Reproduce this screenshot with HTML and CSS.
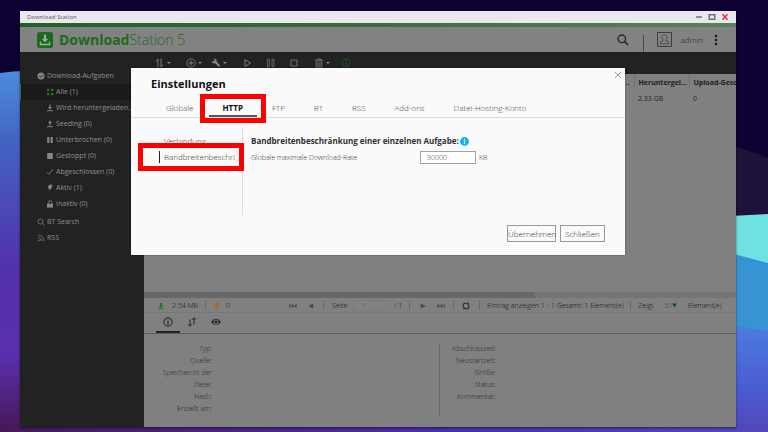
FILE: index.html
```html
<!DOCTYPE html>
<html lang="de">
<head>
<meta charset="utf-8">
<title>Download Station</title>
<link rel="stylesheet" href="styles.css">
</head>
<body>
<svg class="wallpaper" viewBox="0 0 768 432" preserveAspectRatio="none" aria-hidden="true">
  <defs>
    <linearGradient id="left" x1="0" y1="0" x2="0" y2="1">
      <stop offset="0" stop-color="#4b8bdd"/><stop offset=".2" stop-color="#4363c1"/><stop offset=".55" stop-color="#5230ad"/><stop offset=".78" stop-color="#5a2fae"/><stop offset="1" stop-color="#47195a"/>
    </linearGradient>
    <linearGradient id="right" x1="0" y1="0" x2="0" y2="1">
      <stop offset="0" stop-color="#4b7ddd"/><stop offset=".6" stop-color="#4a5bd2"/><stop offset="1" stop-color="#5248b8"/>
    </linearGradient>
    <linearGradient id="floor" x1="0" y1="0" x2="1" y2="0">
      <stop offset="0" stop-color="#47195a"/><stop offset=".3" stop-color="#4b2484"/><stop offset=".6" stop-color="#4a31ae"/><stop offset="1" stop-color="#5248c0"/>
    </linearGradient>
  </defs>
  <rect width="768" height="432" fill="#0d0231"/>
  <path d="M0 73Q14 71 24 71V432H0Z" fill="url(#left)"/>
  <path d="M730 144L768 158V220H730Z" fill="#1d1239"/>
  <path d="M730 216L768 214V268H730Z" fill="#6ee1e2"/>
  <path d="M730 253L768 263V340H730Z" fill="#3793d3"/>
  <path d="M730 325L768 331V432H730Z" fill="url(#right)"/>
  <rect y="424" width="768" height="8" fill="url(#floor)"/>
</svg>

<div class="window">
  <div class="titlebar">
    <span>Download Station</span>
    <div class="window-controls">
      <button aria-label="Minimieren"><svg width="8" height="8" viewBox="0 0 8 8"><path d="M1 4h6" stroke="#6f7176" stroke-width="1.5"/></svg></button>
      <button aria-label="Maximieren"><svg width="8" height="8" viewBox="0 0 8 8"><path d="M1.2 1.7h5.6v4.6H1.2z" fill="none" stroke="#6f7176" stroke-width="1.5"/></svg></button>
      <button aria-label="Fenster schließen"><svg width="8" height="8" viewBox="0 0 8 8"><path d="M1.5 1.2l5 5.6M6.5 1.2l-5 5.6" stroke="#e8302c" stroke-width="1.5"/></svg></button>
    </div>
  </div>
  <div class="accent"></div>

  <header class="header">
    <svg class="logo" width="16" height="16" viewBox="0 0 16 16"><rect width="16" height="16" rx="2.5" fill="#1a6b1c"/><path d="M7 2.500h2v4.200h2.300L8 10.200 4.700 6.700H7z" fill="#a5aaa5"/><path d="M3.500 9.500v3h9v-3" fill="none" stroke="#a5aaa5" stroke-width="1.300"/></svg>
    <h1 class="brand"><b>Download</b>Station 5</h1>
    <button class="search" aria-label="Suchen"><svg width="12" height="12" viewBox="0 0 12 12" fill="none" stroke="#252525"><circle cx="4.800" cy="4.800" r="3.800" stroke-width="1.300"/><path d="M7.600 7.600l3.600 3.400" stroke-width="1.600"/></svg></button>
    <span class="header-line"></span>
    <svg width="15" height="15" viewBox="0 0 15 15" fill="none" stroke="#3d3d3d"><path d="M.5.5h14v14H.5z"/><path d="M6 7.800C3.800 5.500 5 2.700 7.500 2.700S11.200 5.500 9 7.800v1l2.800 1.100v1.900H3.200V9.900L6 8.800z" stroke-width=".8"/></svg>
    <span class="user">admin</span>
    <button class="more" aria-label="Mehr"><svg width="4" height="12" viewBox="0 0 4 12" fill="#1d1d1d"><circle cx="2" cy="2" r="1.300"/><circle cx="2" cy="6" r="1.300"/><circle cx="2" cy="10" r="1.300"/></svg></button>
  </header>

  <div class="body">
    <nav class="sidebar">
      <ul>
        <li><a href="#"><svg width="8" height="8" viewBox="0 0 8 8"><circle cx="4" cy="4" r="3.500" fill="#858585"/><path d="M2.300 4l1.300 1.300 2.300-2.500" fill="none" stroke="#222"/></svg>Download-Aufgaben</a>
          <ul class="sub">
            <li class="selected"><a href="#"><svg width="8" height="8" viewBox="0 0 8 8"><path d="M1 .8h2.300v2.400H1zM5 .8h2.300v2.400H5zM1 4.900h2.300v2.400H1zM5 4.900h2.300v2.400H5z" fill="#1f7a22"/></svg>Alle (1)</a></li>
            <li><a href="#"><svg width="8" height="8" viewBox="0 0 8 8"><path d="M4 .5v3.800" stroke="#858585" stroke-width="1.200"/><path d="M1.900 3h4.200L4 5.500z" fill="#858585"/><path d="M1 6.700h6" stroke="#858585"/></svg>Wird heruntergeladen...</a></li>
            <li><a href="#"><svg width="8" height="8" viewBox="0 0 8 8"><path d="M4 2v3.500" stroke="#858585" stroke-width="1.200"/><path d="M1.900 3h4.200L4 .5z" fill="#858585"/><path d="M1 6.700h6" stroke="#858585"/></svg>Seeding (0)</a></li>
            <li><a href="#"><svg width="8" height="8" viewBox="0 0 8 8"><path d="M1.200 1h2.200v6H1.200zM4.600 1h2.200v6H4.600z" fill="#858585"/></svg>Unterbrochen (0)</a></li>
            <li><a href="#"><svg width="8" height="8" viewBox="0 0 8 8"><path d="M1.200 1h5.600v6H1.200z" fill="#858585"/></svg>Gestoppt (0)</a></li>
            <li><a href="#"><svg width="8" height="8" viewBox="0 0 8 8"><path d="M1 4.500l1.800 2L7 1" fill="none" stroke="#858585" stroke-width=".8"/></svg>Abgeschlossen (0)</a></li>
            <li><a href="#"><svg width="8" height="8" viewBox="0 0 8 8"><path d="M3 .8h3.800L5.300 2.800h1.200L2.500 7.500l1-2.900H1.600z" fill="#858585"/></svg>Aktiv (1)</a></li>
            <li><a href="#"><svg width="8" height="8" viewBox="0 0 8 8"><path d="M1 3.600h6v4H1z" fill="#858585"/><path d="M2.300 3.800V2.200q0-1.500 1.700-1.500t1.700 1.500v1.600M1 5.500h6" fill="none" stroke="#858585" stroke-width=".8"/></svg>Inaktiv (0)</a></li>
          </ul>
        </li>
        <li><a href="#"><svg width="8" height="8" viewBox="0 0 8 8" fill="none" stroke="#858585" stroke-width=".7"><circle cx="3.500" cy="3.500" r="2.500"/><path d="M5.400 5.400l2 1.800"/></svg>BT Search</a></li>
        <li><a href="#"><svg width="8" height="8" viewBox="0 0 8 8" fill="none" stroke="#858585" stroke-width=".8"><path d="M1.500 1.200q5 0 5.200 5.800M1.500 3.500q2.700 0 3 3.500"/><circle cx="2" cy="6.300" r=".5"/></svg>RSS</a></li>
      </ul>
    </nav>

    <main class="main">
      <div class="toolbar">
        <button aria-label="Sortieren"><svg width="10" height="10" viewBox="0 0 10 10" fill="none" stroke="#858585" stroke-width=".9"><path d="M1 3.500L3 1v8.500M6 .5V9l2-2.500"/></svg><i></i></button>
        <button aria-label="Hinzufügen"><svg width="10" height="10" viewBox="0 0 10 10" fill="none" stroke="#858585"><circle cx="5" cy="5" r="4.200" stroke-width=".8"/><path d="M5 2.700v4.600M2.700 5h4.600"/></svg><i></i></button>
        <button aria-label="Werkzeuge"><svg width="10" height="10" viewBox="0 0 10 10"><path d="M.8 3l1.900.4.8-.8L3 .8c2-.5 3.200 1.200 2.600 2.800L9.200 7.700 8 9 4.200 5.300C2.500 6 .7 5 .8 3z" fill="#858585"/></svg><i></i></button>
        <button aria-label="Start"><svg width="10" height="10" viewBox="0 0 10 10"><path d="M2 1.500v7L7.500 5z" fill="none" stroke="#858585" stroke-width=".9"/></svg></button>
        <button aria-label="Pause"><svg width="10" height="10" viewBox="0 0 10 10"><path d="M1.400 1.300H3.400v7.500H1.400zM6 1.300h2v7.500H6z" fill="none" stroke="#858585" stroke-width=".7"/></svg></button>
        <button aria-label="Stopp"><svg width="10" height="10" viewBox="0 0 10 10"><path d="M2 2h6v6H2z" fill="none" stroke="#858585" stroke-width=".8"/></svg></button>
        <button aria-label="Löschen"><svg width="10" height="10" viewBox="0 0 10 10" fill="none" stroke="#858585" stroke-width=".8"><path d="M1 2.200h8M3.500 2V1h3v1M2.200 2.500v6.600h5.600V2.500M4 3.500v4.500M5.900 3.500v4.500"/></svg><i></i></button>
        <button aria-label="Information"><svg width="10" height="10" viewBox="0 0 10 10" fill="none" stroke="#1b551d" stroke-width=".9"><circle cx="5" cy="5" r="4"/><path d="M5 2.300v1M5 4.200v3.500"/></svg></button>
      </div>

      <div class="table-area">
        <table class="tasks">
          <thead><tr><th class="rest">...</th><th class="loaded">Heruntergel...</th><th>Upload-Geschw.</th></tr></thead>
          <tbody><tr><td></td><td>2.33 GB</td><td>0</td></tr></tbody>
        </table>
      </div>
      <div class="scroll"><div class="thumb"></div></div>

      <div class="status">
        <svg width="10" height="8" viewBox="0 0 10 8"><path d="M4 1h2v2.500h1.600L5 6 2.400 3.500H4zM2.500 6.200h5v1h-5z" fill="#137c22"/></svg>
        <span>2.54 MB</span><span class="sep"></span>
        <svg width="6" height="8" viewBox="0 0 6 8"><path d="M1 .8h4v2H1zM.4 3h5.200L4 5.200v2H2v-2z" fill="#b0650f"/></svg>
        <span>0</span>
        <button aria-label="Erste Seite"><svg width="8" height="6" viewBox="0 0 8 6"><path d="M.3.800h1v4.400h-1zM4.400.8v4.400L1.500 3zM7.700.8v4.400L4.700 3z" fill="#4a4a4a"/></svg></button>
        <button aria-label="Vorige Seite"><svg width="6" height="6" viewBox="0 0 6 6"><path d="M5.300.6v4.800L.3 3z" fill="#4a4a4a"/></svg></button>
        <span class="sep"></span>
        <label for="page">Seite</label>
        <input id="page" class="page" value="1">
        <span>/ 1</span><span class="sep"></span>
        <button aria-label="Nächste Seite"><svg width="6" height="6" viewBox="0 0 6 6"><path d="M.7.6v4.800L5.700 3z" fill="#4a4a4a"/></svg></button>
        <button aria-label="Letzte Seite"><svg width="8" height="6" viewBox="0 0 8 6"><path d="M6.700.8h1v4.400h-1zM3.600.8v4.400L6.500 3zM.3.8v4.400L3.300 3z" fill="#4a4a4a"/></svg></button>
        <span class="sep"></span>
        <button aria-label="Aktualisieren"><svg width="8" height="8" viewBox="0 0 8 8" fill="none" stroke="#282828" stroke-width="1.100"><path d="M1.200 5V3.200Q1.200 1.200 3.200 1.200H6M6.800 3v1.800q0 2-2 2H2"/><path d="M6.900.3v2.400H4.700zM1.100 7.700V5.300h2.200z" fill="#282828" stroke="none"/></svg></button>
        <span class="sep"></span>
        <span>Eintrag anzeigen 1 - 1 Gesamt: 1 Element(e)</span><span class="sep"></span>
        <label for="count">Zeigt</label>
        <span class="count"><select id="count"><option>50</option></select><svg width="5" height="5" viewBox="0 0 5 5"><path d="M0 .5h5L2.500 4.500z" fill="#0b4468"/></svg></span>
        <span>Element(e)</span>
      </div>

      <div class="detail-tabs">
        <button class="on" aria-label="Allgemein"><svg width="10" height="10" viewBox="0 0 10 10" fill="none" stroke="#1d1d1d"><circle cx="5" cy="5" r="4.200"/><path d="M5 2.300v1.100M5 4.200v3.500" stroke-width="1.100"/></svg></button>
        <button aria-label="Übertragung"><svg width="10" height="10" viewBox="0 0 10 10" fill="none" stroke="#1d1d1d" stroke-width=".9"><path d="M3 2.500v6.700M1 7.200l2 2 2-2M7 7.500V.8M5 2.800l2-2 2 2"/></svg></button>
        <button aria-label="Ansicht"><svg width="10" height="10" viewBox="0 0 10 10"><path d="M0 5Q5-1.500 10 5 5 11.500 0 5z" fill="#1d1d1d"/><circle cx="5" cy="5" r="2" fill="none" stroke="#808080" stroke-width="1.100"/></svg></button>
      </div>

      <div class="details">
        <dl><dt>Typ:</dt><dt>Quelle:</dt><dt>Speicherort der</dt><dt>Datei:</dt><dt>Hash:</dt><dt>Erstellt am:</dt></dl>
        <dl><dt>Abschlusszeit:</dt><dt>Neustartzeit:</dt><dt>Größe:</dt><dt>Status:</dt><dt>Kommentar:</dt></dl>
      </div>
    </main>
  </div>

  <section class="dialog" role="dialog" aria-labelledby="dialog-title">
    <button class="close" aria-label="Schließen"><svg width="8" height="8" viewBox="0 0 8 8"><path d="M1 1l6 6M7 1L1 7" stroke="#979797" stroke-width=".9"/></svg></button>
    <h2 id="dialog-title">Einstellungen</h2>
    <nav class="tabs">
      <a href="#">Globale</a>
      <a href="#" class="on">HTTP<span class="mark mark-tab"></span></a>
      <a href="#">FTP</a>
      <a href="#">BT</a>
      <a href="#">RSS</a>
      <a href="#">Add-ons</a>
      <a href="#">Datei-Hosting-Konto</a>
    </nav>
    <div class="dialog-body">
      <nav class="pages">
        <div class="page-item"><a href="#">Verbindung</a></div>
        <div class="page-item on"><a href="#">Bandbreitenbeschränkung</a><span class="mark mark-page"></span></div>
      </nav>
      <form class="form">
        <h3>Bandbreitenbeschränkung einer einzelnen Aufgabe:<svg width="9" height="9" viewBox="0 0 9 9"><circle cx="4.500" cy="4.500" r="4.400" fill="#0fb0f5"/><path d="M4.500 1.700v1.200M4.500 3.700v3.500" stroke="#fff" stroke-width="1.200"/></svg></h3>
        <div class="field">
          <label for="rate">Globale maximale Download-Rate</label>
          <input id="rate" value="30000">
          <span>KB</span>
        </div>
      </form>
    </div>
    <div class="actions">
      <button>Übernehmen</button>
      <button>Schließen</button>
    </div>
  </section>
</div>
</body>
</html>
```

FILE: styles.css
```css
* { box-sizing: border-box; }

body {
  margin: 0;
  min-height: 100vh;
  display: flex;
  padding: 11px 32px 5px 20px;
  background: #0d0231;
  color: #262626;
  font: 7px/12px "Open Sans", sans-serif;
  overflow: hidden;
}

svg { display: block; flex: none; }
a { color: inherit; text-decoration: none; }
ul, dl { margin: 0; padding: 0; list-style: none; }
button, input, select { font: inherit; color: inherit; margin: 0; padding: 0; }
button { background: none; border: 0; }

.wallpaper { position: absolute; inset: 0; width: 100%; height: 100%; }

.window {
  position: relative;
  flex: 1;
  min-width: 0;
  display: flex;
  flex-direction: column;
  background: #808080;
  box-shadow: 0 1px 2px #0008;
}

.titlebar {
  height: 12px;
  display: flex;
  justify-content: space-between;
  align-items: center;
  padding: 0 7px;
  background: #e9e8ee;
  font-size: 6px;
  color: #55565c;
}
.window-controls { display: flex; gap: 5px; }
.accent { height: 4px; background: linear-gradient(90deg, #235f25, #386c39 45%, #5c805d); }

.header {
  height: 25px;
  display: flex;
  align-items: center;
  padding: 0 18px 0 17px;
  background: #828282;
}
.brand {
  margin: 0 auto 0 6px;
  font-size: 14px;
  line-height: 20px;
  font-weight: 300;
  color: #1b6a1d;
}
.brand b { font-weight: 700; }
.header-line { width: 1px; height: 17px; margin: 0 13px 0 14px; background: #4b4b4b; align-self: flex-end; }
.user { margin: 0 11px 0 8px; font-size: 8px; font-weight: 300; color: #222; }

.body { flex: 1; display: flex; min-height: 0; }

.sidebar {
  flex: none;
  width: 124px;
  padding-top: 16px;
  background: #222;
  color: #909090;
}
.sidebar a {
  display: flex;
  align-items: center;
  gap: 2px;
  height: 16px;
  padding-left: 17px;
  white-space: nowrap;
}
.sub { margin-bottom: 2px; }
.sub a { padding-left: 26px; }
.sub .selected { background: #1a1a1a; box-shadow: inset 1px 0 #1f7a22; }

.main { flex: 1; min-width: 0; display: flex; flex-direction: column; }

.toolbar {
  height: 22px;
  display: grid;
  grid-template-columns: 31px 25px 32px 23px 23px 25px 27px 1fr;
  align-items: center;
  padding-left: 11px;
  background: #222;
}
.toolbar button { display: flex; align-items: center; gap: 2px; }
.toolbar i { width: 4px; height: 2px; background: #858585; clip-path: polygon(0 0, 100% 0, 50% 100%); }

.table-area { flex: 1; min-height: 0; overflow: hidden; }
.tasks { width: 100%; border-collapse: collapse; table-layout: fixed; }
.tasks th, .tasks td {
  height: 16px;
  padding: 1px 0 0 4px;
  text-align: left;
  white-space: nowrap;
  overflow: hidden;
  font-weight: 400;
}
.tasks th { border-right: 1px solid #707070; font-weight: 700; color: #1d1d1d; }
.tasks th:last-child { border-right: 0; width: 47px; }
.tasks .rest { text-align: right; padding-right: 4px; }
.tasks .loaded { width: 55px; }

.scroll { height: 6px; background: #757575; }
.thumb { width: 66%; height: 6px; background: #686868; }

.status {
  height: 15px;
  display: grid;
  grid-template-columns: 16px 33px 9px 12px 63px 19px 15px 9px 22px 40px 15px 11px 17px 16px 9px 17px 8px 143px 8px 26px 24px 1fr;
  align-items: center;
  padding: 1px 0 0 12px;
  border-bottom: 1px solid #787878;
  font-weight: 300;
  color: #111;
  white-space: nowrap;
}
.sep { width: 1px; height: 9px; background: #686868; }
.page { width: 33px; height: 11px; padding-left: 6px; background: #828282; border: 1px solid #7a7a7a; color: #0d6080; }
.count { display: flex; align-items: center; color: #0d5680; }
.count select { appearance: none; background: none; border: 0; width: 8px; }

.detail-tabs {
  height: 21px;
  display: flex;
  padding-left: 12px;
  border-bottom: 1px solid #5d5d5d;
}
.detail-tabs button { width: 24px; display: flex; justify-content: center; align-items: center; border-bottom: 2px solid transparent; }
.detail-tabs .on { border-color: #222; }

.details {
  height: 93px;
  display: grid;
  grid-template-columns: 295px 1fr;
  padding: 9px 0 11px;
  font-weight: 300;
  background: linear-gradient(#6a6a6a, #6a6a6a) 295px 9px / 1px 73px no-repeat;
}
.details dl { text-align: right; }
.details dl:first-child { padding-right: 227px; }
.details dl:last-child { width: 57px; }

.dialog {
  position: absolute;
  top: 57px;
  left: 111px;
  right: 111px;
  display: flex;
  flex-direction: column;
  background: #fafafa;
  box-shadow: 0 0 2px #0006;
  color: #333;
}
.close { position: absolute; top: 3px; right: 3px; }
.dialog h2 { margin: 8px 20px 10px; font-size: 11px; line-height: 16px; color: #111; }
.tabs { display: flex; gap: 1px; padding-left: 21px; border-bottom: 1px solid #dcdcdc; font-size: 8px; font-weight: 300; color: #444; }
.tabs a { position: relative; padding: 0 14px 3px; height: 15px; }
.tabs .on { color: #111; font-weight: 700; box-shadow: inset 0 -2px #555; }

.mark { position: absolute; pointer-events: none; border: 5px solid #fe0000; }
.mark-tab { inset: -8px -9px -6px -9px; }
.mark-page { inset: -6px -2px -6px 7px; }

.dialog-body { display: grid; grid-template-columns: 112px 1fr; margin-top: 9px; height: 88px; }
.pages { border-right: 1px solid #dcdcdc; padding-top: 6px; font-size: 8px; font-weight: 300; }
.page-item { position: relative; height: 16px; padding: 2px 7px 2px 28px; }
.page-item a { display: block; height: 12px; padding-left: 4px; overflow: hidden; border-left: 1px solid transparent; }
.page-item.on a { border-color: #222; }
.form { padding: 8px 0 0 8px; font-weight: 300; }
.form h3 { display: flex; align-items: center; gap: 1px; margin: 0 0 4px; font-size: 8px; line-height: 12px; color: #303030; white-space: nowrap; }
.field { display: flex; align-items: center; }
.field label { width: 169px; }
.field input { width: 56px; height: 13px; padding-left: 6px; margin-right: 3px; border: 1px solid #a5a5a5; background: #fff; }

.actions { display: flex; justify-content: flex-end; gap: 4px; padding: 10px 20px 13px; }
.actions button { height: 17px; width: 45px; border: 1px solid #999; font-size: 8px; font-weight: 300; white-space: nowrap; }
.actions button:first-child { width: 49px; }
```
